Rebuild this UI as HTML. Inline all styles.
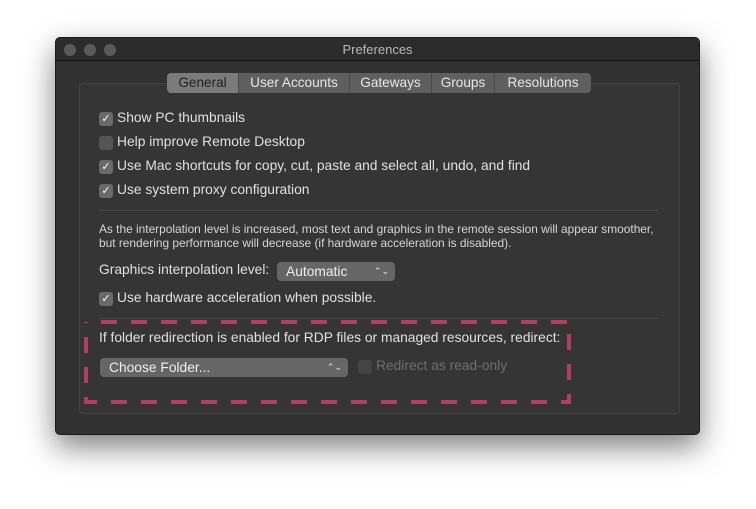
<!DOCTYPE html>
<html><head><style>
*{margin:0;padding:0;box-sizing:border-box}
body{width:756px;height:509px;background:#fff;position:relative;overflow:hidden;font-family:"Liberation Sans",sans-serif;color:#dcdcdc}
.win{position:absolute;left:55px;top:37px;width:645px;height:398px;background:#323232;border:1px solid #1a1a1a;border-radius:5px;box-shadow:0 12px 30px rgba(0,0,0,.5)}
.tb{position:absolute;left:0;top:0;width:100%;height:23px;background:#2c2c2c;border-bottom:1px solid #111;border-radius:5px 5px 0 0;text-align:center;font-size:13px;line-height:23px;color:#b8b8b8}
.dot{position:absolute;top:6px;width:12px;height:12px;border-radius:50%;background:#5a5a5a}
.panel{position:absolute;left:23px;top:45px;width:601px;height:331px;border:1px solid #444;background:#353535;border-radius:4px}
.tabs{position:absolute;left:111px;top:35px;height:20px;display:flex;border-radius:4px;overflow:hidden;font-size:13.6px;line-height:20px}
.tabs div{background:#5f5f5f;color:#e6e6e6;border-left:1px solid #4a4a4a;text-align:center}
.tabs .sel{background:#7b7b7b;color:#222;border-left:none}
.t{position:absolute;font-size:13.8px;white-space:nowrap;color:#e0e0e0}
.cb{position:absolute;width:14px;height:14px;border-radius:3px;background:#6a6a6a;color:#fff;font-size:11px;line-height:14px;text-align:center}
.sep{position:absolute;left:43px;width:559px;height:1px;background:#484848}
.pop{position:absolute;height:19px;background:#666;border-radius:4px;font-size:13.8px;line-height:19px;padding-left:9px;color:#eee}
.pop span{position:absolute;right:6px;top:0;font-size:9px;line-height:19px}
.small{font-size:11.9px;color:#d6d6d6}
</style></head><body>
<div class="win">
<div class="tb">Preferences</div>
<div class="dot" style="left:8px"></div><div class="dot" style="left:28px"></div><div class="dot" style="left:48px"></div>
<div class="panel"></div>
<div class="tabs">
<div class="sel" style="width:71px">General</div>
<div style="width:111px">User Accounts</div>
<div style="width:82px">Gateways</div>
<div style="width:63px">Groups</div>
<div style="width:97px">Resolutions</div>
</div>
<div class="cb" style="left:43px;top:74px">✓</div><div class="t" style="left:61px;top:72px">Show PC thumbnails</div>
<div class="cb" style="left:43px;top:98px;background:#555"></div><div class="t" style="left:61px;top:96px">Help improve Remote Desktop</div>
<div class="cb" style="left:43px;top:122px">✓</div><div class="t" style="left:61px;top:120px">Use Mac shortcuts for copy, cut, paste and select all, undo, and find</div>
<div class="cb" style="left:43px;top:146px">✓</div><div class="t" style="left:61px;top:144px">Use system proxy configuration</div>
<div class="sep" style="top:172px"></div>
<div class="t small" style="left:43px;top:184px">As the interpolation level is increased, most text and graphics in the remote session will appear smoother,</div>
<div class="t small" style="left:43px;top:198px">but rendering performance will decrease (if hardware acceleration is disabled).</div>
<div class="t" style="left:43px;top:224px">Graphics interpolation level:</div>
<div class="pop" style="left:221px;top:224px;width:118px">Automatic<span>⌃⌄</span></div>
<div class="cb" style="left:43px;top:254px">✓</div><div class="t" style="left:61px;top:252px">Use hardware acceleration when possible.</div>
<div class="sep" style="top:280px"></div>
<div class="t" style="left:43px;top:292px">If folder redirection is enabled for RDP files or managed resources, redirect:</div>
<div class="pop" style="left:44px;top:320px;width:248px">Choose Folder...<span>⌃⌄</span></div>
<div class="cb" style="left:302px;top:322px;background:#444"></div><div class="t" style="left:320px;top:320px;color:#6e6e6e">Redirect as read-only</div>
</div>
<svg style="position:absolute;left:0;top:0" width="756" height="509">
<path d="M101 322 H569 V402 H86 V322" fill="none" stroke="#b0405e" stroke-width="4" stroke-dasharray="16 14"/>
</svg>
</body></html>
